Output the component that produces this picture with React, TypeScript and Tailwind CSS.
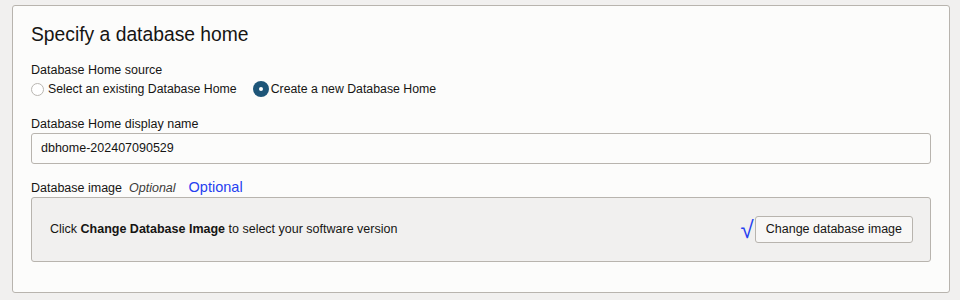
import React from 'react';

const font = { fontFamily: '"Liberation Sans", Arial, sans-serif' };

function Radio({ checked, label }: { checked?: boolean; label: string }) {
  return (
    <label className="flex items-center">
      {checked ? (
        <span className="flex h-[16px] w-[16px] items-center justify-center rounded-full bg-[#1d5578]">
          <span className="h-[4px] w-[4px] rounded-full bg-white" />
        </span>
      ) : (
        <span className="h-[13px] w-[13px] rounded-full border border-[#b9b6b1] bg-white" />
      )}
      <span className={checked ? 'ml-[2px]' : 'ml-[4px]'}>{label}</span>
    </label>
  );
}

export default function App() {
  return (
    <div
      className="min-h-[300px] w-[960px] bg-[#f1f0ef] pl-[12px] pr-[10px] pt-[5px] text-[12.5px] text-[#161513]"
      style={font}
    >
      <div className="h-[288px] rounded-[3px] border border-[#b8b4ae] bg-[#fcfcfb] px-[18px] pt-[17px]">
        <h2 className="text-[19.3px] leading-[24px] text-[#161513]">Specify a database home</h2>

        <div className="mt-[15px] leading-[16px]">Database Home source</div>
        <div className="mt-[2px] flex h-[18px] items-center gap-[16px] text-[12.3px]">
          <Radio label="Select an existing Database Home" />
          <Radio checked label="Create a new Database Home" />
        </div>

        <div className="mt-[18px] leading-[16px]">Database Home display name</div>
        <div className="mt-[1px] flex h-[31px] items-center rounded-[3px] border border-[#b8b4ae] bg-[#fcfcfb] px-[9px] text-[12.5px]">
          dbhome-202407090529
        </div>

        <div className="mt-[15px] flex items-baseline leading-[16px]">
          <span>Database image</span>
          <span className="ml-[7px] italic text-[#3d3b39]">Optional</span>
          <span className="ml-[13px] text-[14.5px] text-[#2541f0]">Optional</span>
        </div>

        <div className="mt-[1px] flex h-[65px] items-center justify-between rounded-[3px] border border-[#b8b4ae] bg-[#f1f0ef] pl-[18px] pr-[17px]">
          <div>
            Click <b>Change Database Image</b> to select your software version
          </div>
          <div className="flex items-center">
            <span className="mr-[1px] text-[24px] leading-[24px] text-[#2541f0]">√</span>
            <button className="h-[27px] rounded-[3px] border border-[#b8b4ae] bg-[#f8f7f6] px-[10px] text-[12.5px] text-[#161513]">
              Change database image
            </button>
          </div>
        </div>
      </div>
    </div>
  );
}
